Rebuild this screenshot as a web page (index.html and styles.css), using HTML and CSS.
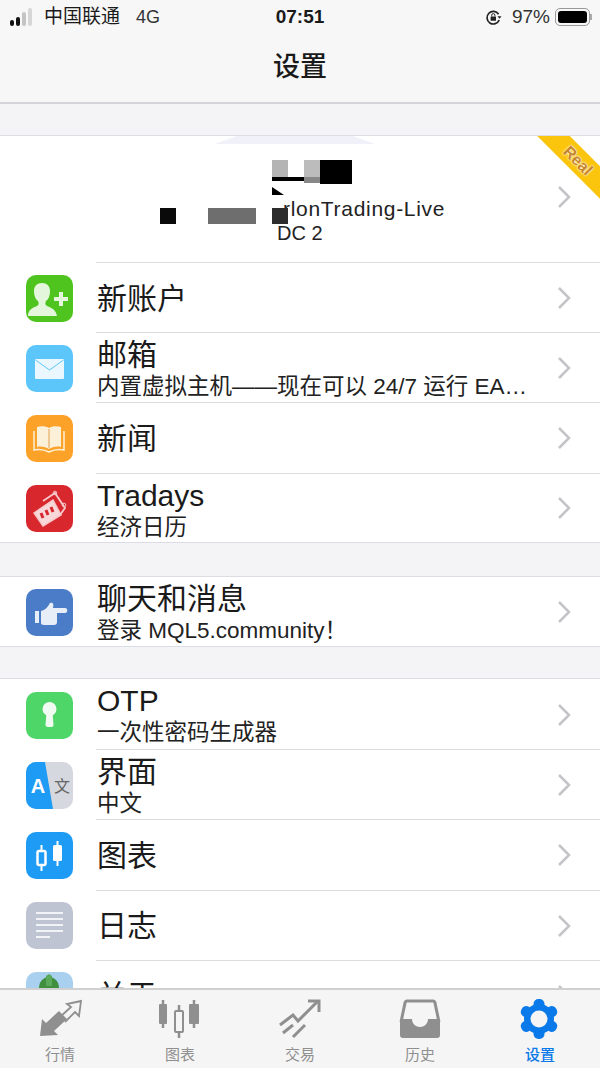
FILE: index.html
```html
<!DOCTYPE html>
<html lang="zh-CN">
<head>
  <meta charset="UTF-8">
  <meta name="viewport" content="width=device-width, initial-scale=1.0">
  <title>设置</title>
  <link rel="stylesheet" href="styles.css">
</head>
<body>
  <header class="top">
    <div class="status">
      <div class="status-left">
        <div class="signal">
          <span class="bar b1"></span><span class="bar b2"></span><span class="bar b3"></span><span class="bar b4"></span>
        </div>
        <span class="carrier">中国联通</span>
        <span class="network">4G</span>
      </div>
      <div class="clock">07:51</div>
      <div class="status-right">
        <svg class="lock" width="17" height="17" viewBox="0 0 17 17">
          <path d="M13.6 5.2A6.3 6.3 0 1 0 14.2 11" fill="none" stroke="#222" stroke-width="1.7"/>
          <path d="M12.5 7.2h4l-2 2.6z" fill="#222"/>
          <rect x="5.6" y="7.4" width="5.4" height="4.4" rx="0.6" fill="#222"/>
          <path d="M6.7 7.4V6.2a1.6 1.6 0 0 1 3.2 0v1.2" fill="none" stroke="#222" stroke-width="1"/>
        </svg>
        <span class="percent">97%</span>
        <div class="battery"><div class="battery-fill"></div></div>
        <div class="battery-tip"></div>
      </div>
    </div>
    <h1 class="nav-title">设置</h1>
  </header>

  <main class="content">
    <section class="group first">
      <div class="account">
        <div class="account-text">
          <div class="server">rlonTrading-Live</div>
          <div class="dc">DC 2</div>
        </div>
        <svg class="chevron" width="15" height="24" viewBox="0 0 15 24"><path d="M2 2l10 10L2 22" /></svg>

        <svg class="smudge" width="160" height="10" viewBox="0 0 160 10"><path d="M22 0h116l22 8H0z" fill="#f1f1fa"/></svg>
        <div class="pixel p1"></div>
        <div class="pixel p2"></div>
        <div class="pixel p3"></div>
        <div class="pixel p4"></div>
        <div class="pixel p5"></div>
        <div class="pixel p6"></div>
        <div class="pixel p7"></div>
        <div class="pixel p8"></div>
        <div class="pixel p9"></div>
        <div class="ribbon"><span>Real</span></div>
      </div>

      <div class="row">
        <svg class="icon" viewBox="0 0 47 47">
          <rect width="47" height="47" rx="10" fill="#4fc41e"/>
          <path d="M2 41c0-6 4-8 9-10 2-1 2-3 1-5-3-2-4-6-4-10 0-5 3-8 8-8s8 3 8 8c0 4-1 8-4 10-1 2-1 4 1 5 5 2 9 4 10 10z" fill="#e4f7dc"/>
          <path d="M33 17h4v5h5v4h-5v5h-4v-5h-5v-4h5z" fill="#e4f7dc"/>
        </svg>
        <div class="row-body"><div class="title">新账户</div></div>
        <svg class="chevron" width="15" height="24" viewBox="0 0 15 24"><path d="M2 2l10 10L2 22" /></svg>
      </div>

      <div class="row">
        <svg class="icon" viewBox="0 0 47 47">
          <rect width="47" height="47" rx="10" fill="#5cc6fb"/>
          <rect x="9" y="14" width="29" height="20" rx="1" fill="#eaf7ff"/>
          <path d="M9.500 15l14 10 14-10" fill="none" stroke="#5cc6fb" stroke-width="1"/>
        </svg>
        <div class="row-body two-line">
          <div class="title">邮箱</div>
          <div class="sub">内置虚拟主机——现在可以 24/7 运行 EA…</div>
        </div>
        <svg class="chevron" width="15" height="24" viewBox="0 0 15 24"><path d="M2 2l10 10L2 22" /></svg>
      </div>

      <div class="row">
        <svg class="icon" viewBox="0 0 47 47">
          <rect width="47" height="47" rx="10" fill="#fda228"/>
          <path d="M11 12c4-1 9-1 12 1 3-2 8-2 12-1v20c-4-1-9 0-12 2-3-2-8-3-12-2z" fill="#fdf0d8"/>
          <path d="M8 16v19c5-1 11 0 15 2 4-2 10-3 15-2V16" fill="none" stroke="#fdf0d8" stroke-width="1.500"/>
          <path d="M23 14v19" stroke="#e0a050" stroke-width="1"/>
        </svg>
        <div class="row-body"><div class="title">新闻</div></div>
        <svg class="chevron" width="15" height="24" viewBox="0 0 15 24"><path d="M2 2l10 10L2 22" /></svg>
      </div>

      <div class="row last">
        <svg class="icon" viewBox="0 0 47 47">
          <rect width="47" height="47" rx="10" fill="#d9272e"/>
          <path d="M17 16L29 8l10 15-5 7" fill="none" stroke="#f6c9cb" stroke-width="1.800"/>
          <path d="M8 28l19-13 8 15-18 11z" fill="#f8d8d8" stroke="#f6c9cb" stroke-width="1.500"/>
          <path d="M15 28l2 5M20 25l2 5M25 22l2 5" stroke="#d9272e" stroke-width="3"/>
          <circle cx="29" cy="8" r="1.800" fill="none" stroke="#f6c9cb"/>
          <circle cx="38" cy="20" r="1.800" fill="none" stroke="#f6c9cb"/>
        </svg>
        <div class="row-body two-line">
          <div class="title">Tradays</div>
          <div class="sub">经济日历</div>
        </div>
        <svg class="chevron" width="15" height="24" viewBox="0 0 15 24"><path d="M2 2l10 10L2 22" /></svg>
      </div>
    </section>

    <section class="group">
      <div class="row last">
        <svg class="icon" viewBox="0 0 47 47">
          <rect width="47" height="47" rx="10" fill="#4a7cc8"/>
          <rect x="9" y="22" width="4" height="12" fill="#e8eef8"/>
          <path d="M15 22c4-1 7-4 9-8 3-1 4 1 3 5h12c3 0 3 5 0 5h-8v9c0 2-1 3-3 3H18c-2 0-3-1-3-2z" fill="#e8eef8"/>
        </svg>
        <div class="row-body two-line">
          <div class="title">聊天和消息</div>
          <div class="sub">登录 MQL5.community！</div>
        </div>
        <svg class="chevron" width="15" height="24" viewBox="0 0 15 24"><path d="M2 2l10 10L2 22" /></svg>
      </div>
    </section>

    <section class="group otp">
      <div class="row">
        <svg class="icon" viewBox="0 0 47 47">
          <rect width="47" height="47" rx="10" fill="#4fd668"/>
          <circle cx="23.500" cy="17" r="7" fill="#f0fbf2"/>
          <path d="M20.500 20h6l1 13c0 1-1 2-2 2h-4c-1 0-2-1-2-2z" fill="#f0fbf2"/>
        </svg>
        <div class="row-body two-line">
          <div class="title">OTP</div>
          <div class="sub">一次性密码生成器</div>
        </div>
        <svg class="chevron" width="15" height="24" viewBox="0 0 15 24"><path d="M2 2l10 10L2 22" /></svg>
      </div>

      <div class="row">
        <svg class="icon" viewBox="0 0 47 47">
          <rect width="47" height="47" rx="10" fill="#d5d8de"/>
          <path d="M10 0h9l8 47H10A10 10 0 0 1 0 37V10A10 10 0 0 1 10 0z" fill="#1e9bf5"/>
          <text x="12" y="31" class="icon-a">A</text>
          <text x="28" y="30" class="icon-wen">文</text>
        </svg>
        <div class="row-body two-line">
          <div class="title">界面</div>
          <div class="sub">中文</div>
        </div>
        <svg class="chevron" width="15" height="24" viewBox="0 0 15 24"><path d="M2 2l10 10L2 22" /></svg>
      </div>

      <div class="row">
        <svg class="icon" viewBox="0 0 47 47">
          <rect width="47" height="47" rx="10" fill="#1e9bf5"/>
          <path d="M15.500 13v26M31.500 9v25" stroke="#fff" stroke-width="2"/>
          <rect x="11.500" y="19" width="8" height="14" rx="1.500" fill="#1e9bf5" stroke="#fff" stroke-width="2.500"/>
          <rect x="27" y="13" width="9" height="16" rx="1.500" fill="#fff"/>
        </svg>
        <div class="row-body"><div class="title">图表</div></div>
        <svg class="chevron" width="15" height="24" viewBox="0 0 15 24"><path d="M2 2l10 10L2 22" /></svg>
      </div>

      <div class="row">
        <svg class="icon" viewBox="0 0 47 47">
          <rect width="47" height="47" rx="10" fill="#bfc4d2"/>
          <path d="M10 11h27M10 17h27M10 23h27M10 29h27M10 35h14" stroke="#f2f3f7" stroke-width="2"/>
        </svg>
        <div class="row-body"><div class="title">日志</div></div>
        <svg class="chevron" width="15" height="24" viewBox="0 0 15 24"><path d="M2 2l10 10L2 22" /></svg>
      </div>

      <div class="row">
        <svg class="icon" viewBox="0 0 47 47">
          <rect width="47" height="47" rx="10" fill="#a9d0ef"/>
          <circle cx="23" cy="15" r="10" fill="#3f8f3f"/>
          <path d="M20 4l3-2 3 2v10h-6z" fill="#5aa85a"/>
        </svg>
        <div class="row-body"><div class="title">关于</div></div>
        <svg class="chevron" width="15" height="24" viewBox="0 0 15 24"><path d="M2 2l10 10L2 22" /></svg>
      </div>
    </section>
  </main>

  <nav class="tabs">
    <div class="tab">
      <svg width="44" height="40" viewBox="0 0 44 40">
        <path d="M2 37l2-17 4 4 13-12 8 8-13 12 4 4z" fill="#8f8f8f"/>
        <path d="M22 18L33 8l-4-3 14-3-2 15-4-4-10 10" fill="none" stroke="#8f8f8f" stroke-width="1.800"/>
      </svg>
      <span>行情</span>
    </div>
    <div class="tab">
      <svg width="44" height="40" viewBox="0 0 44 40">
        <path d="M5 1v28M21 6v33M36 1v28" stroke="#8f8f8f" stroke-width="2.500"/>
        <rect x="1" y="5" width="8" height="20" rx="1" fill="#8f8f8f"/>
        <rect x="17" y="12" width="8" height="21" rx="1" fill="#f5f5f5" stroke="#8f8f8f" stroke-width="2"/>
        <rect x="31" y="5" width="10" height="20" rx="1" fill="#8f8f8f"/>
      </svg>
      <span>图表</span>
    </div>
    <div class="tab">
      <svg width="44" height="40" viewBox="0 0 44 40">
        <path d="M2 26l13-10 5 6 20-20" fill="none" stroke="#8f8f8f" stroke-width="3"/>
        <path d="M30 2h11v11" fill="none" stroke="#8f8f8f" stroke-width="3"/>
        <path d="M5 34l10-8M15 38l12-12" fill="none" stroke="#8f8f8f" stroke-width="3"/>
      </svg>
      <span>交易</span>
    </div>
    <div class="tab">
      <svg width="44" height="40" viewBox="0 0 44 40">
        <path d="M3 23L7 4c0-1 1-2 2-2h26c1 0 2 1 2 2l4 19" fill="none" stroke="#8f8f8f" stroke-width="3"/>
        <path d="M2 20h12c0 4 3 8 8 8s8-4 8-8h12v16c0 2-1 3-3 3H5c-2 0-3-1-3-3z" fill="#8f8f8f"/>
      </svg>
      <span>历史</span>
    </div>
    <div class="tab active">
      <svg width="44" height="40" viewBox="0 0 44 40">
        <g fill="#0a7aea">
          <circle cx="21" cy="20" r="15"/>
          <rect x="15.500" y="0" width="11" height="40" rx="5"/>
          <rect x="15.500" y="0" width="11" height="40" rx="5" transform="rotate(60 21 20)"/>
          <rect x="15.500" y="0" width="11" height="40" rx="5" transform="rotate(120 21 20)"/>
        </g>
        <circle cx="21" cy="20" r="8.500" fill="#f5f5f5"/>
      </svg>
      <span>设置</span>
    </div>
  </nav>
</body>
</html>
```

FILE: styles.css
```css
* {
  box-sizing: border-box;
}

html,
body {
  height: 100%;
}

body {
  display: flex;
  flex-direction: column;
  margin: 0;
  overflow: hidden;
  background-color: #f4f4f6;
  color: #1a1a1a;
  font-family: "Liberation Sans", "Noto Sans CJK SC", sans-serif;
}

/* status bar and title */
.top {
  height: 104px;
  flex-shrink: 0;
  padding-top: 6px;
  background-color: #f7f7f7;
  border-bottom: 2px solid #d3d3da;
}

.status {
  display: grid;
  grid-template-columns: 1fr auto 1fr;
  align-items: center;
  height: 22px;
  padding: 0 10px;
  font-size: 18px;
  line-height: 22px;
}

.status-left,
.status-right {
  display: flex;
  align-items: center;
}

.status-right {
  justify-content: flex-end;
}

.signal {
  display: flex;
  align-items: flex-end;
  gap: 2px;
  width: 24px;
}

.bar {
  width: 4px;
  border-radius: 2px;
  background-color: #111;
}

.b1 { height: 6px; }
.b2 { height: 9px; }
.b3 { height: 14px; background-color: #c4c4c4; }
.b4 { height: 18px; background-color: #d6d6d6; }

.carrier {
  margin-left: 10px;
  font-size: 19px;
  line-height: 22px;
  margin-top: -1px;
}

.network {
  margin-left: 16px;
  color: #333;
}

.clock {
  font-size: 19px;
  font-weight: bold;
}

.lock {
  margin-right: 10px;
}

.percent {
  margin-right: 5px;
  font-size: 19px;
  color: #333;
}

.battery {
  width: 35px;
  height: 18px;
  padding: 2px;
  border: 1.500px solid #999;
  border-radius: 5px;
}

.battery-fill {
  height: 100%;
  border-radius: 3px;
  background-color: #000;
}

.battery-tip {
  width: 2px;
  height: 6px;
  margin-right: -2px;
  background-color: #aaa;
}

.nav-title {
  margin: 15px 0 0;
  font-size: 27px;
  font-weight: 500;
  line-height: 48px;
  text-align: center;
}

/* list */
.content {
  flex: 1;
  min-height: 0;
  overflow: hidden;
}

.group {
  margin-top: 33px;
  background-color: #fff;
  border-top: 1px solid #dcdce2;
}

.group.first {
  margin-top: 31px;
}

.group.otp {
  margin-top: 31px;
}

.account {
  position: relative;
  display: flex;
  align-items: flex-end;
  justify-content: flex-end;
  height: 126px;
  padding-bottom: 16px;
  overflow: hidden;
}

.account-text {
  position: absolute;
  left: 277px;
  top: 60px;
  font-size: 20px;
  line-height: 25px;
  color: #222;
}

.server {
  margin-left: 6px;
  font-size: 21px;
  letter-spacing: 0.7px;
}

.account .chevron {
  margin: 0 28px 37px 0;
}

.smudge {
  position: absolute;
  left: 215px;
  top: 0;
}

/* censored name, the pixel squares over the text */
.pixel {
  position: absolute;
}

.p1 { left: 272px; top: 24px; width: 16px; height: 17px; background-color: #b4b4b4; }
.p2 { left: 304px; top: 24px; width: 16px; height: 17px; background-color: #bcbcbc; }
.p3 { left: 320px; top: 24px; width: 32px; height: 24px; background-color: #000; }
.p4 { left: 272px; top: 41px; width: 32px; height: 4px; background-color: #000; }
.p5 { left: 304px; top: 41px; width: 16px; height: 6px; background-color: #888; }
.p6 { left: 272px; top: 51px; width: 12px; height: 8px; background-color: #000; clip-path: polygon(0 0, 100% 100%, 0 100%); }
.p7 { left: 160px; top: 72px; width: 16px; height: 16px; background-color: #0a0a0a; }
.p8 { left: 208px; top: 72px; width: 48px; height: 16px; background-color: #6e6e6e; }
.p9 { left: 272px; top: 72px; width: 16px; height: 16px; background-color: #2c2c2c; }

.ribbon {
  position: absolute;
  top: 13px;
  right: -43px;
  width: 130px;
  height: 23px;
  background-color: #fbc50d;
  color: #c8862a;
  font-size: 16px;
  font-weight: bold;
  line-height: 23px;
  text-align: center;
  transform: rotate(45deg);
}

.ribbon span {
  text-shadow: 0 0 2px #fff, 0 0 2px #fff;
}

.row {
  display: flex;
  align-items: center;
  height: 70.2px;
  padding-left: 26px;
}

.icon {
  width: 47px;
  height: 47px;
  flex-shrink: 0;
  margin-right: 23px;
  margin-top: 2px;
}

.icon-a {
  fill: #fff;
  font-size: 20px;
  font-weight: bold;
  text-anchor: middle;
}

.icon-wen {
  fill: #666;
  font-size: 16px;
}

.row-body {
  flex: 1;
  display: flex;
  flex-direction: column;
  justify-content: center;
  align-self: stretch;
  min-width: 0;
  padding-top: 2px;
  border-top: 1.500px solid #dcdce0;
}

.row-body.two-line {
  justify-content: flex-start;
  padding-top: 5px;
}

.title {
  padding-left: 1px;
  font-size: 30px;
  line-height: 34px;
  color: #1a1a1a;
}

.sub {
  padding-left: 1px;
  font-size: 22.500px;
  line-height: 30px;
  color: #222;
  white-space: nowrap;
}

.row .chevron {
  position: relative;
  z-index: 1;
  margin-top: 2px;
  margin-left: -43px;
  margin-right: 28px;
}

.chevron {
  flex-shrink: 0;
}

.chevron path {
  fill: none;
  stroke: #c4c4c8;
  stroke-width: 2.500;
}

.row.last {
  border-bottom: 1px solid #dcdce6;
}

.group .row:first-child .row-body {
  border-top: none;
}

/* tab bar */
.tabs {
  display: flex;
  height: 80px;
  flex-shrink: 0;
  padding-top: 9px;
  background-color: #f5f5f5;
  border-top: 2px solid #d0d0d0;
}

.tab {
  flex: 1;
  display: flex;
  flex-direction: column;
  align-items: center;
  font-size: 15px;
  line-height: 20px;
  color: #8f8f8f;
}

.tab svg {
  margin-bottom: 6px;
}

.tab.active {
  color: #0a7aea;
  font-weight: 500;
}
```
